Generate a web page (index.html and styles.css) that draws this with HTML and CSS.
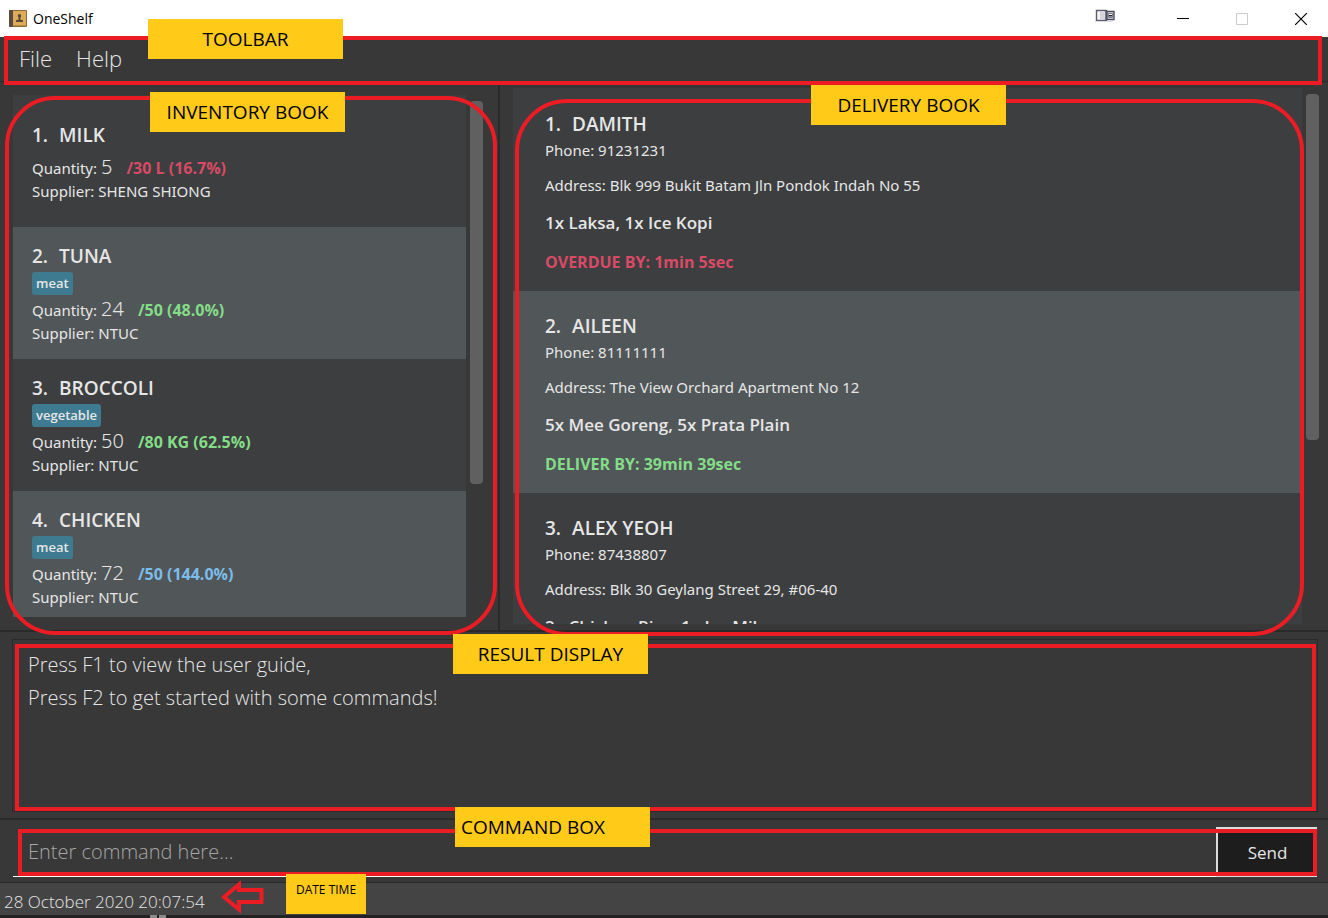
FILE: index.html
```html
<!DOCTYPE html>
<html lang="en">
<head>
<meta charset="utf-8">
<title>OneShelf</title>
<link rel="stylesheet" href="styles.css">
</head>
<body>
<header class="titlebar">
  <svg class="app-icon" width="18" height="18" viewBox="0 0 18 18" aria-hidden="true">
    <rect width="18" height="17" rx="1" fill="#8b6a35"/>
    <rect width="4" height="17" rx="1" fill="#5a4a42"/>
    <rect x="4" y="1" width="13" height="14" fill="#dcac5a"/>
    <path d="M4 15.500h13" stroke="#b98b45"/>
    <path d="M10.500 4c1.100 0 1.700.8 1.700 1.700 0 .9-.4 1.500-.8 1.900v1.800l2.600.8V12h-7v-1.800l2.600-.8V7.600c-.4-.4-.8-1-.8-1.900 0-.9.600-1.700 1.700-1.700z" fill="#5b4a36"/>
  </svg>
  <span class="app-name">OneShelf</span>
  <svg class="device-icon" width="20" height="14" viewBox="0 0 20 14" aria-hidden="true">
    <path d="M1.500 1.500h10v10h-10z" fill="#f4f4f6" stroke="#5c5c6c" stroke-width="1.400"/>
    <path d="M5 2h4v9H5z" fill="#d4d4da"/>
    <path d="M10.500 2v9" stroke="#77778a" stroke-width="1.400"/>
    <path d="M12 2.500h7v8h-7z" fill="#e8e8ee" stroke="#4a4a5c" stroke-width="1.400"/>
    <path d="M13.500 4.500h4v4h-4z" fill="#fff" stroke="#77778a"/>
    <path d="M14 6h3v1.500h-3z" fill="#22222c"/>
    <path d="M0 12.500h18" stroke="#dcdce0"/>
  </svg>
  <div class="window-controls">
    <button type="button" aria-label="Minimize"><svg width="12" height="12" viewBox="0 0 12 12"><path d="M0 5.500h12" stroke="#000"/></svg></button>
    <button type="button" aria-label="Maximize" disabled><svg width="12" height="12" viewBox="0 0 12 12"><path d="M.5.500h11v11H.5z" fill="none" stroke="#ccc"/></svg></button>
    <button type="button" aria-label="Close"><svg width="12" height="12" viewBox="0 0 12 12"><path d="M0 0l12 12M12 0L0 12" stroke="#000" stroke-width="1.200"/></svg></button>
  </div>
</header>

<nav class="menubar">
  <button type="button">File</button>
  <button type="button">Help</button>
  <div class="frame frame-toolbar"></div>
  <span class="label label-toolbar">TOOLBAR</span>
</nav>

<main class="books">
  <section class="pane inventory" aria-label="Inventory book">
    <ul class="list">
      <li class="item">
        <h2><span>1.</span><span>MILK</span></h2>
        <div class="tags"></div>
        <p class="quantity"><span>Quantity:</span><span class="count">5</span><strong class="low">/30 L (16.7%)</strong></p>
        <p class="supplier">Supplier: SHENG SHIONG</p>
      </li>
      <li class="item">
        <h2><span>2.</span><span>TUNA</span></h2>
        <div class="tags"><span class="tag">meat</span></div>
        <p class="quantity"><span>Quantity:</span><span class="count">24</span><strong class="ok">/50 (48.0%)</strong></p>
        <p class="supplier">Supplier: NTUC</p>
      </li>
      <li class="item">
        <h2><span>3.</span><span>BROCCOLI</span></h2>
        <div class="tags"><span class="tag">vegetable</span></div>
        <p class="quantity"><span>Quantity:</span><span class="count">50</span><strong class="ok">/80 KG (62.5%)</strong></p>
        <p class="supplier">Supplier: NTUC</p>
      </li>
      <li class="item">
        <h2><span>4.</span><span>CHICKEN</span></h2>
        <div class="tags"><span class="tag">meat</span></div>
        <p class="quantity"><span>Quantity:</span><span class="count">72</span><strong class="full">/50 (144.0%)</strong></p>
        <p class="supplier">Supplier: NTUC</p>
      </li>
    </ul>
    <div class="track"><div class="thumb"></div></div>
    <div class="frame frame-inventory"></div>
    <span class="label label-inventory">INVENTORY BOOK</span>
  </section>

  <section class="pane delivery" aria-label="Delivery book">
    <ul class="list">
      <li class="order">
        <h2><span>1.</span><span>DAMITH</span></h2>
        <p>Phone: 91231231</p>
        <p class="address">Address: Blk 999 Bukit Batam Jln Pondok Indah No 55</p>
        <p class="dishes">1x Laksa, 1x Ice Kopi</p>
        <p><strong class="low">OVERDUE BY: 1min 5sec</strong></p>
      </li>
      <li class="order">
        <h2><span>2.</span><span>AILEEN</span></h2>
        <p>Phone: 81111111</p>
        <p class="address">Address: The View Orchard Apartment No 12</p>
        <p class="dishes">5x Mee Goreng, 5x Prata Plain</p>
        <p><strong class="ok">DELIVER BY: 39min 39sec</strong></p>
      </li>
      <li class="order">
        <h2><span>3.</span><span>ALEX YEOH</span></h2>
        <p>Phone: 87438807</p>
        <p class="address">Address: Blk 30 Geylang Street 29, #06-40</p>
        <p class="dishes">2x Chicken Rice, 1x Ice Milo</p>
      </li>
    </ul>
    <div class="track"><div class="thumb"></div></div>
    <div class="frame frame-delivery"></div>
    <span class="label label-delivery">DELIVERY BOOK</span>
  </section>
</main>

<section class="result" aria-label="Result display">
  <div class="result-text">Press F1 to view the user guide,<br>Press F2 to get started with some commands!</div>
  <div class="frame frame-result"></div>
  <span class="label label-result">RESULT DISPLAY</span>
</section>

<form class="command">
  <input type="text" aria-label="Command" placeholder="Enter command here...">
  <button type="button">Send</button>
  <div class="frame frame-command"></div>
  <span class="label label-command">COMMAND BOX</span>
</form>

<footer class="status">
  <time datetime="2020-10-28T20:07:54">28 October 2020 20:07:54</time>
  <svg class="arrow" width="46" height="36" viewBox="0 0 46 36" aria-hidden="true">
    <path d="M5 18L20 5.500V11h22.500v12H20v7.500z" fill="none" stroke="#ec1c24" stroke-width="4"/>
  </svg>
  <span class="label label-date">DATE TIME</span>
</footer>
<div class="edge"><i></i><i></i></div>
</body>
</html>
```

FILE: styles.css
```css
* {
  box-sizing: border-box;
}

body {
  margin: 0;
  height: 100vh;
  display: flex;
  flex-direction: column;
  background: #383838;
  color: #e6e6e6;
  font-family: "Open Sans", "Noto Sans", sans-serif;
  font-size: 15px;
  overflow: hidden;
}

h2, p, ul {
  margin: 0;
  padding: 0;
}

ul {
  list-style: none;
}

button {
  font: inherit;
  color: inherit;
  background: none;
  border: 0;
  padding: 0;
}

/* Title bar */
.titlebar {
  flex: none;
  height: 37px;
  padding-left: 9px;
  display: flex;
  align-items: center;
  background: #fff;
  color: #000;
}

.app-name {
  margin-left: 6px;
  font-size: 14px;
}

.device-icon {
  margin: 0 41px 6px auto;
}

.window-controls {
  display: flex;
  gap: 5px;
}

.window-controls button {
  width: 54px;
  height: 36px;
  display: grid;
  place-items: center;
}

/* Menu */
.menubar {
  position: relative;
  flex: none;
  height: 45px;
  padding: 0 0 2px 19px;
  display: flex;
  align-items: center;
  gap: 24px;
  border-bottom: 1px solid #2a2a2a;
  font-size: 22px;
  font-weight: 300;
}

/* Books */
.books {
  flex: 548 1 0;
  min-height: 0;
  display: grid;
  grid-template-columns: 125fr 207fr;
  grid-template-rows: minmax(0, 1fr);
}

.pane {
  position: relative;
  min-width: 0;
  display: flex;
}

.inventory {
  padding: 13px 15px 13px 13px;
  border-right: 2px solid #2a2a2a;
}

.delivery {
  padding: 6px 9px 6px 13px;
}

.list {
  flex: 1;
  overflow: hidden;
  background: #3c3e3f;
}

.delivery .list {
  padding-top: 1px;
}

.track {
  flex: none;
  width: 17px;
  padding: 6px 0 6px 4px;
}

.thumb {
  height: 75%;
  border-radius: 4px;
  background: #606060;
}

.delivery .thumb {
  height: 66%;
}

.item, .order {
  display: flex;
  flex-direction: column;
  background: #3c3e3f;
}

.item:nth-child(even), .order:nth-child(even) {
  background: #515658;
}

.item {
  height: 132px;
  padding-left: 19px;
  justify-content: center;
}

h2 {
  display: flex;
  gap: 11px;
  font-size: 19px;
  line-height: 28px;
  font-weight: 600;
}

p {
  font-family: "Noto Sans", "Open Sans", sans-serif;
}

.tags {
  display: flex;
  min-height: 6px;
  padding: 2px 0;
}

.tag {
  padding: 0 4px;
  border-radius: 3px;
  background: #3e7b91;
  font-size: 13px;
  font-weight: 600;
  line-height: 23px;
}

.quantity {
  display: flex;
  align-items: baseline;
  gap: 4px;
  line-height: 24px;
}

.count {
  font-size: 20px;
  font-weight: 300;
}

.quantity strong {
  margin-left: 10px;
}

.supplier {
  line-height: 22px;
}

strong {
  font-family: "Open Sans", "Noto Sans", sans-serif;
  font-size: 16px;
  font-weight: 700;
}

.low {
  color: #d94a66;
}

.ok {
  color: #84dc88;
}

.full {
  color: #7cbce8;
}

.order {
  height: 202px;
  padding: 21px 32px 0;
  line-height: 24px;
}

.order .address {
  padding: 11px 0 14px;
}

.order .dishes {
  padding-bottom: 15px;
  font-family: "Open Sans", "Noto Sans", sans-serif;
  font-size: 17px;
  font-weight: 600;
}

/* Result display */
.result {
  position: relative;
  flex: 173 1 0;
  min-height: 0;
  padding: 7px 10px 6px 12px;
  display: flex;
  border: solid #2a2a2a;
  border-width: 2px 0;
}

.result-text {
  flex: 1;
  padding: 8px 15px;
  border: 1px solid #2a2a2a;
  font-size: 20px;
  font-weight: 300;
  line-height: 33px;
}

/* Command box */
.command {
  position: relative;
  flex: none;
  height: 63px;
  padding: 7px 11px 5px 13px;
  display: flex;
  border-bottom: 1px solid #2a2a2a;
}

.command input {
  flex: 1;
  min-width: 0;
  padding: 0 15px;
  border: 0;
  border-bottom: 1px solid #fff;
  background: none;
  color: #e6e6e6;
  font: 300 20px "Open Sans", "Noto Sans", sans-serif;
}

.command input::placeholder {
  color: #a6a6a6;
  opacity: 1;
}

.command button {
  width: 101px;
  border: solid #dcdcdc;
  border-width: 2px 0 1px 2px;
  background: #1d1d1d;
  font-size: 17px;
}

/* Status bar */
.status {
  position: relative;
  flex: none;
  height: 32px;
  padding: 6px 4px 0;
  background: #444;
  font-size: 17px;
  line-height: 26px;
  font-weight: 300;
}

.arrow {
  position: absolute;
  left: 219px;
  top: -4px;
}

.edge {
  flex: none;
  height: 3px;
  padding-left: 150px;
  display: flex;
  gap: 2px;
  background: #232121;
}

.edge i {
  width: 7px;
  background: #8a8a8a;
}

/* Annotations over the interface */
.frame {
  position: absolute;
  z-index: 1;
  border: 4px solid #ec1c24;
  pointer-events: none;
}

.frame-toolbar {
  inset: -1px 6px -4px 4px;
}

.frame-inventory {
  inset: 14px 1px -5px 5px;
  border-radius: 50px;
}

.frame-delivery {
  inset: 17px 24px -6px 15px;
  border-radius: 52px;
}

.frame-result {
  inset: 12px 12px 7px 15px;
}

.frame-command {
  inset: 9px 11px 6px 18px;
}

.label {
  position: absolute;
  z-index: 2;
  width: 195px;
  background: #ffca18;
  color: #000;
  font-size: 19px;
  font-weight: 400;
  line-height: 40px;
  text-align: center;
}

.label-toolbar {
  left: 148px;
  top: -18px;
}

.label-inventory {
  left: 150px;
  top: 10px;
}

.label-delivery {
  left: 311px;
  top: 3px;
}

.label-result {
  left: 453px;
  top: 2px;
}

.label-command {
  left: 455px;
  top: -13px;
  padding-left: 6px;
  text-align: left;
}

.label-date {
  left: 286px;
  top: -9px;
  width: 80px;
  height: 40px;
  font-size: 12px;
  line-height: 32px;
}
```
